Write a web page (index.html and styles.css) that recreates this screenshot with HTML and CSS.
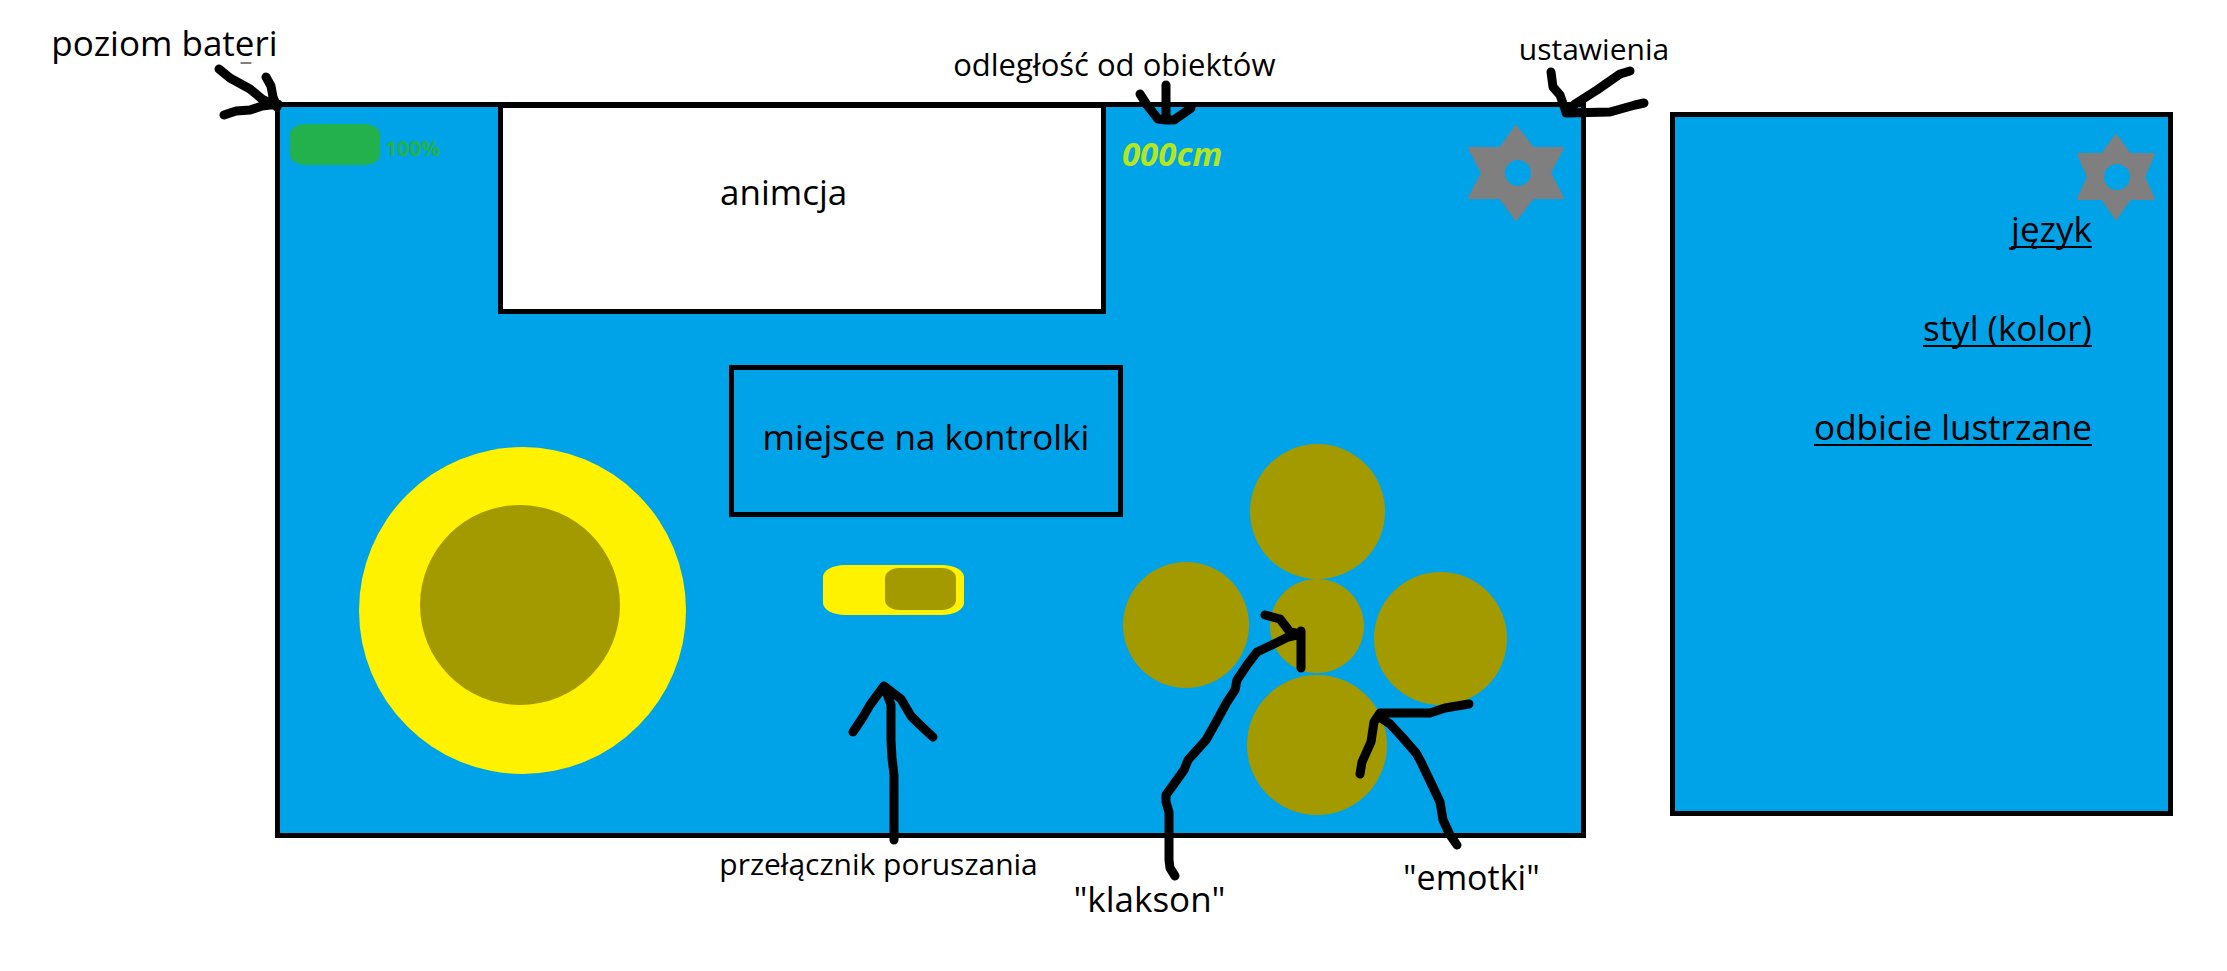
FILE: index.html
```html
<!DOCTYPE html>
<html lang="pl">
<head>
<meta charset="utf-8">
<meta name="viewport" content="width=device-width, initial-scale=1">
<title>Panel sterowania</title>
<link rel="stylesheet" href="styles.css">
</head>
<body>
<main class="board">
  <section class="panel" aria-label="Sterowanie">
    <div class="status">
      <div class="battery"><span class="battery-bar"></span><span class="battery-value">100%</span></div>
      <div class="animation">animcja</div>
      <div class="tools">
        <output class="distance">000cm</output>
        <button class="gear" type="button" aria-label="Ustawienia">
          <svg width="98" height="98" viewBox="0 0 98 98" fill="#7f7f7f" stroke="#7f7f7f" stroke-width="2" stroke-linejoin="round"><path d="M49 2 66 24H96L83 49 96 74H66L49 96 33 74H2L15 49 2 24H33Z"/><circle cx="51" cy="49" r="13" fill="#00a2e8" stroke="none"/></svg>
        </button>
      </div>
    </div>
    <div class="controls">
      <div class="joystick"><button class="joystick-knob" type="button" aria-label="Joystick"></button></div>
      <div class="center">
        <div class="indicators">miejsce na kontrolki</div>
        <input class="switch" id="drive" type="checkbox" role="switch" checked>
      </div>
      <div class="pad">
        <button class="pad-top" type="button" aria-label="Emotka 1"></button>
        <button class="pad-left" type="button" aria-label="Emotka 2"></button>
        <button class="pad-horn" type="button" aria-label="Klakson"></button>
        <button class="pad-right" type="button" aria-label="Emotka 3"></button>
        <button class="pad-bottom" type="button" aria-label="Emotka 4"></button>
      </div>
    </div>
  </section>

  <aside class="settings" aria-label="Menu ustawień">
    <button class="gear settings-gear" type="button" aria-label="Zamknij ustawienia">
      <svg width="80" height="88" viewBox="0 0 80 88" fill="#7f7f7f" stroke="#7f7f7f" stroke-width="2" stroke-linejoin="round"><path d="M40 2 54 21H78L68 44 78 66H54L40 86 26 66H2L12 44 2 21H26Z"/><circle cx="41" cy="44" r="13" fill="#00a2e8" stroke="none"/></svg>
    </button>
    <nav class="menu">
      <a href="#jezyk">język</a>
      <a href="#styl">styl (kolor)</a>
      <a href="#odbicie">odbicie lustrzane</a>
    </nav>
  </aside>

  <svg class="arrows" viewBox="0 0 2227 971" preserveAspectRatio="none" aria-hidden="true">
    <path d="M219 69 230 78 250 89 262 99 276 106M266 77 271 86 273 97 277 107M224 115 236 111 250 110 262 106 278 104"/>
    <path d="M1166 85V120M1140 94 1147 105 1158 119 1166 120 1174 120 1184 113 1191 108"/>
    <path d="M1551 72 1553 87 1560 95 1566 112M1630 71 1620 74 1597 90 1575 104 1566 112M1644 103 1635 105 1610 112 1566 113"/>
    <path d="M894 840V775L892 758 891 740V705L885 688M853 732 863 717 870 705 884 686 901 699 911 716 920 725 933 737"/>
    <path d="M1175 876 1170 868 1169 860V812L1166 802V795L1184 770 1188 760 1206 740 1215 724 1227 702 1235 690 1237 680 1247 665 1257 652 1276 643 1288 637 1301 634M1265 615 1280 619 1290 632 1301 634M1301 631V668"/>
    <path d="M1457 845 1450 835 1443 820 1440 802 1432 785 1421 762 1416 753 1403 738 1390 724 1378 716M1360 774 1362 762 1371 742 1374 722 1380 713H1430L1445 708 1469 704"/>
    <path class="thin" d="M241 63H251"/>
  </svg>
  <span class="note note-battery">poziom bateri</span>
  <span class="note note-small note-distance">odległość od obiektów</span>
  <span class="note note-small note-settings">ustawienia</span>
  <label class="note note-small note-switch" for="drive">przełącznik poruszania</label>
  <span class="note note-horn">"klakson"</span>
  <span class="note note-emotes">"emotki"</span>
</main>
</body>
</html>
```
FILE: styles.css
```css
* {
  box-sizing: border-box;
}

body {
  margin: 0;
  background: #fff;
  color: #000;
  font-family: "Open Sans", "Noto Sans", sans-serif;
  font-size: 35px;
  line-height: 48px;
}

button {
  padding: 0;
  border: 0;
  border-radius: 50%;
  background: #a39a00;
}

.board {
  position: relative;
  display: grid;
  grid-template-columns: 1311fr 503fr;
  column-gap: 4.43%;
  align-items: start;
  padding: 102px 2.43% 133px 12.35%;
}

.panel,
.settings {
  border: 5px solid #000;
  background: #00a2e8;
}

.status {
  display: grid;
  grid-template-columns: 218fr 608fr 475fr;
}

.battery {
  display: flex;
  gap: 5px;
  padding: 17px 10px;
}

.battery-bar {
  width: 90px;
  height: 41px;
  border-radius: 16px / 10px;
  background: #22b14c;
}

.battery-value {
  color: #22b14c;
  font-size: 21px;
  font-weight: 700;
}

.animation {
  padding: 60px 0 93px 217px;
  border: 5px solid #000;
  border-top-width: 1px;
  background: #fff;
}

.tools {
  display: flex;
  justify-content: space-between;
  align-items: flex-start;
  padding: 17px 16px;
}

.distance {
  padding-top: 6px;
  color: #b5e61d;
  font-size: 33px;
  font-style: italic;
  font-weight: 700;
}

.gear {
  border-radius: 0;
  background: none;
}

.gear svg {
  display: block;
}

.controls {
  display: grid;
  grid-template-columns: 449fr 394fr 458fr;
  align-items: start;
}

.joystick {
  width: 327px;
  height: 327px;
  margin: 133px 0 0 79px;
  padding: 58px 61px;
  border-radius: 50%;
  background: #fff200;
}

.joystick-knob {
  display: block;
  width: 200px;
  height: 200px;
}

.center {
  padding-top: 51px;
}

.indicators {
  padding: 43px 0 51px;
  border: 5px solid #000;
  text-align: center;
}

.switch {
  appearance: none;
  display: flex;
  justify-content: flex-end;
  width: 141px;
  height: 50px;
  margin: 48px 0 0 94px;
  padding: 3px 8px;
  border-radius: 22px / 12px;
  background: #fff200;
}

.switch::before {
  content: "";
  width: 71px;
  height: 42px;
  border-radius: 14px / 10px;
  background: #a39a00;
}

.switch:not(:checked) {
  justify-content: flex-start;
}

.pad {
  display: grid;
  grid-template: 135px 96px 140px / 126px 137px 121px;
  justify-items: center;
  padding: 130px 0 18px;
}

.pad-top {
  grid-area: 1 / 2;
  width: 135px;
  height: 135px;
}

.pad-left {
  grid-area: 2 / 1;
  width: 126px;
  height: 126px;
  margin-top: -17px;
}

.pad-horn {
  grid-area: 2 / 2;
  width: 94px;
  height: 94px;
}

.pad-right {
  grid-area: 2 / 3;
  justify-self: end;
  width: 133px;
  height: 133px;
  margin-top: -7px;
}

.pad-bottom {
  grid-area: 3 / 2;
  width: 140px;
  height: 140px;
}

.settings {
  position: relative;
  margin-top: 10px;
}

.settings-gear {
  position: absolute;
  top: 16px;
  right: 12px;
}

.menu {
  display: flex;
  flex-direction: column;
  align-items: flex-end;
  gap: 51px;
  padding: 88px 76px 360px 0;
}

.menu a {
  color: inherit;
  text-decoration-thickness: 2px;
  text-decoration-skip-ink: none;
  text-underline-offset: 4px;
}

.arrows {
  position: absolute;
  inset: 0;
  width: 100%;
  height: 100%;
  fill: none;
  stroke: #000;
  stroke-width: 9;
  stroke-linecap: round;
  stroke-linejoin: round;
  pointer-events: none;
}

.arrows .thin {
  stroke-width: 1;
}

.note {
  position: absolute;
  white-space: nowrap;
}

.note-small {
  font-size: 31px;
}

.note-battery {
  top: 19px;
  left: 2.3%;
}

.note-distance {
  top: 40px;
  left: 42.8%;
}

.note-settings {
  top: 25px;
  left: 68.2%;
  font-size: 30px;
}

.note-switch {
  top: 840px;
  left: 32.3%;
  font-size: 30px;
}

.note-horn {
  top: 875px;
  left: 48.2%;
}

.note-emotes {
  top: 853px;
  left: 63%;
  font-size: 34px;
}
```
